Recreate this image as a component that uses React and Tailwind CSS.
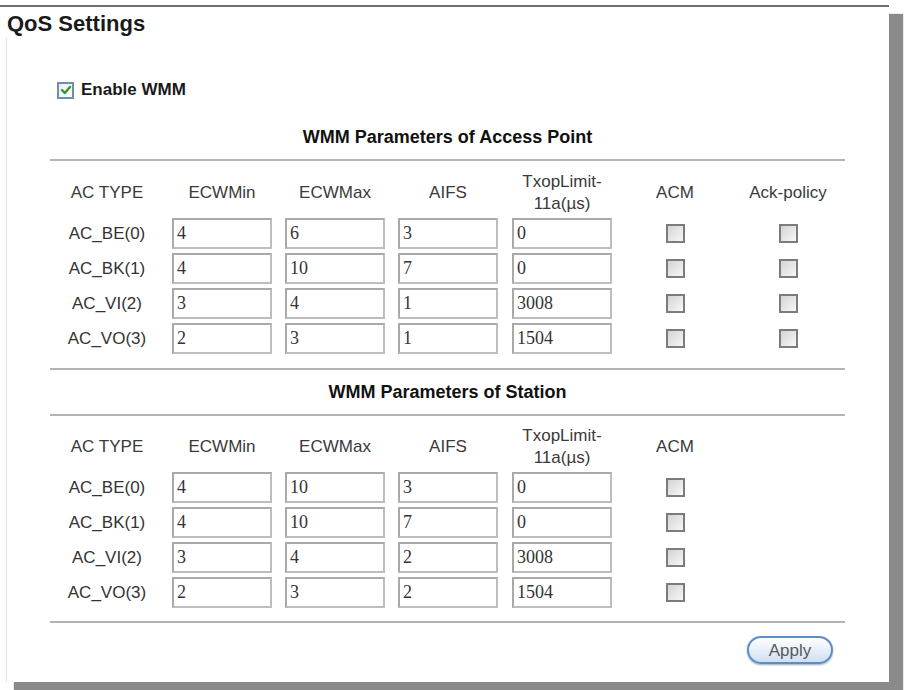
import React from 'react';

const apRows = [
  { name: 'AC_BE(0)', min: '4', max: '6', aifs: '3', txop: '0' },
  { name: 'AC_BK(1)', min: '4', max: '10', aifs: '7', txop: '0' },
  { name: 'AC_VI(2)', min: '3', max: '4', aifs: '1', txop: '3008' },
  { name: 'AC_VO(3)', min: '2', max: '3', aifs: '1', txop: '1504' },
];

const staRows = [
  { name: 'AC_BE(0)', min: '4', max: '10', aifs: '3', txop: '0' },
  { name: 'AC_BK(1)', min: '4', max: '10', aifs: '7', txop: '0' },
  { name: 'AC_VI(2)', min: '3', max: '4', aifs: '2', txop: '3008' },
  { name: 'AC_VO(3)', min: '2', max: '3', aifs: '2', txop: '1504' },
];

const cols = 'grid grid-cols-[122px_113px_113px_114px_113px_113px_107px]';

function Cell({ children }) {
  return <div className="w-[100px] flex items-center justify-center text-center">{children}</div>;
}

function Field({ value }) {
  return (
    <input
      type="text"
      defaultValue={value}
      className="w-[100px] h-[31px] border-2 border-[#bdbdbd] border-t-[#a9a9a9] border-l-[#a9a9a9] bg-white pl-[3px] text-[18px] text-[#333] outline-none"
      style={{ fontFamily: '"Liberation Serif", "Times New Roman", serif' }}
    />
  );
}

function Box() {
  return (
    <span className="block w-[19px] h-[19px] border-2 border-[#7c7c7c] bg-gradient-to-br from-[#d4d4d4] to-[#f7f7f7]" />
  );
}

function Rule() {
  return <div className="h-[2px] bg-[#b4b4b4] w-[795px]" />;
}

function Section({ title, rows, ack, headMt, ruleMt, headerMt }) {
  return (
    <div>
      <div className={`${headMt} w-[795px] text-center font-bold text-[18px] leading-[22px] text-[#111]`}>{title}</div>
      <div className={ruleMt}>
        <Rule />
      </div>
      <div className={`${cols} ${headerMt} h-[50px] items-center text-[17px] text-[#3a3a3a]`}>
        <div className="pl-[7px]"><Cell>AC TYPE</Cell></div>
        <Cell>ECWMin</Cell>
        <Cell>ECWMax</Cell>
        <Cell>AIFS</Cell>
        <Cell>
          <span className="leading-[22px]">TxopLimit-<br />11a(µs)</span>
        </Cell>
        <Cell>ACM</Cell>
        {ack ? <Cell>Ack-policy</Cell> : <div />}
      </div>
      <div className="flex flex-col gap-[4px]">
        {rows.map((r) => (
          <div key={r.name} className={`${cols} h-[31px] items-center text-[17px] text-[#333]`}>
            <div className="pl-[7px]"><Cell>{r.name}</Cell></div>
            <Field value={r.min} />
            <Field value={r.max} />
            <Field value={r.aifs} />
            <Field value={r.txop} />
            <Cell><Box /></Cell>
            {ack ? <Cell><Box /></Cell> : <div />}
          </div>
        ))}
      </div>
    </div>
  );
}

export default function App() {
  return (
    <div
      className="w-[904px] h-[690px] bg-white overflow-hidden"
      style={{ fontFamily: '"Liberation Sans", Arial, sans-serif' }}
    >
      <div className="mt-[5px] w-[889px] h-[677px] bg-white border-t-2 border-[#707070] shadow-[14px_9px_1px_#8a8a8a] flex flex-col">
        <div className="pl-[7px] pt-[3px] text-[22px] leading-[28px] font-bold text-[#1a1a1a]">QoS Settings</div>
        <div className="ml-[6px] flex-1 border-l border-[#e2e2e2] pl-[43px]">
          <label className="mt-[42px] h-[20px] flex items-center gap-[7px] pl-[7px]">
            <span className="w-[17px] h-[17px] border-2 border-[#6f8fa8] bg-gradient-to-br from-[#e8eef3] to-white flex items-center justify-center">
              <svg width="12" height="12" viewBox="0 0 12 12">
                <path d="M2 6.2 L4.8 9 L10 3" fill="none" stroke="#2f9a2f" strokeWidth="2.4" strokeLinecap="round" strokeLinejoin="round" />
              </svg>
            </span>
            <span className="font-bold text-[17px] text-[#1a1a1a]">Enable WMM</span>
          </label>

          <Section
            title="WMM Parameters of Access Point"
            rows={apRows}
            ack
            headMt="mt-[26px]"
            ruleMt="mt-[11px]"
            headerMt="mt-[7px]"
          />
          <div className="mt-[14px]">
            <Rule />
          </div>
          <Section
            title="WMM Parameters of Station"
            rows={staRows}
            ack={false}
            headMt="mt-[11px]"
            ruleMt="mt-[11px]"
            headerMt="mt-[6px]"
          />
          <div className="mt-[13px]">
            <Rule />
          </div>
          <div className="mt-[13px] w-[783px] flex justify-end">
            <button className="w-[86px] h-[28px] rounded-full border-2 border-[#5b8dc6] bg-gradient-to-b from-white to-[#cfe0f2] text-[17px] text-[#5a5a5a] shadow-[0_1px_2px_#9ab]">
              Apply
            </button>
          </div>
        </div>
      </div>
    </div>
  );
}
